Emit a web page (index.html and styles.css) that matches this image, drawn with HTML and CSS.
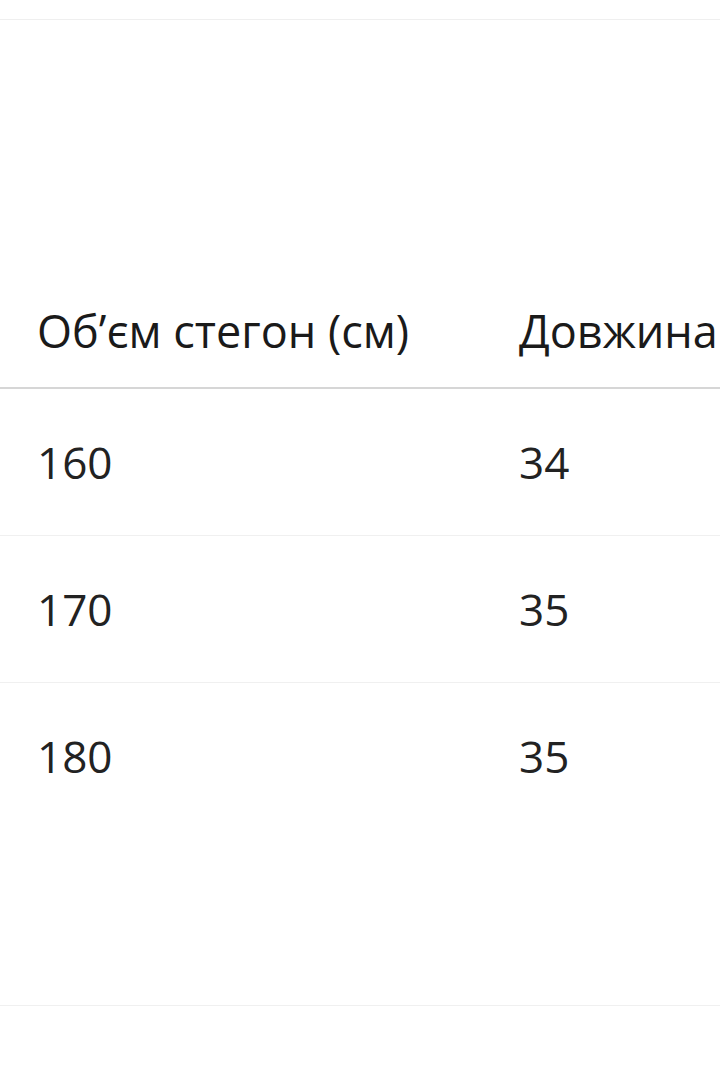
FILE: index.html
```html
<!DOCTYPE html>
<html lang="uk">
<head>
<meta charset="utf-8">
<title>Таблиця розмірів</title>
<link rel="stylesheet" href="styles.css">
</head>
<body>
<div class="sheet">
  <div class="top-rule"></div>
  <div class="row head">
    <div class="cell c1">Об’єм стегон (см)</div>
    <div class="cell c2">Довжина</div>
  </div>
  <div class="row body">
    <div class="cell c1">160</div>
    <div class="cell c2">34</div>
  </div>
  <div class="row body">
    <div class="cell c1">170</div>
    <div class="cell c2">35</div>
  </div>
  <div class="row body last">
    <div class="cell c1">180</div>
    <div class="cell c2">35</div>
  </div>
</div>
</body>
</html>
```
FILE: styles.css
```css
html, body {
  margin: 0;
  padding: 0;
  background: #ffffff;
}
body {
  width: 720px;
  height: 1080px;
  overflow: hidden;
  font-family: "Open Sans", "Noto Sans", "DejaVu Sans", sans-serif;
  font-size: 44px;
  line-height: 60px;
  color: #222222;
}
.sheet {
  width: 720px;
}
.top-rule {
  height: 19px;
  border-bottom: 1px solid #efefef;
}
.row {
  display: flex;
  white-space: nowrap;
}
.cell {
  box-sizing: border-box;
}
.c1 {
  width: 519px;
  padding-left: 37px;
}
.c2 {
  flex: 1;
}
.head {
  height: 369px;
  align-items: flex-end;
  padding-bottom: 26px;
  box-sizing: border-box;
  border-bottom: 2px solid #d6d6d6;
  color: #1a1a1a;
  font-size: 45px;
}
.body {
  height: 147px;
  box-sizing: border-box;
  padding-top: 43px;
  border-bottom: 1px solid #f0f0f0;
}
.body.last {
  height: 323px;
}
```
